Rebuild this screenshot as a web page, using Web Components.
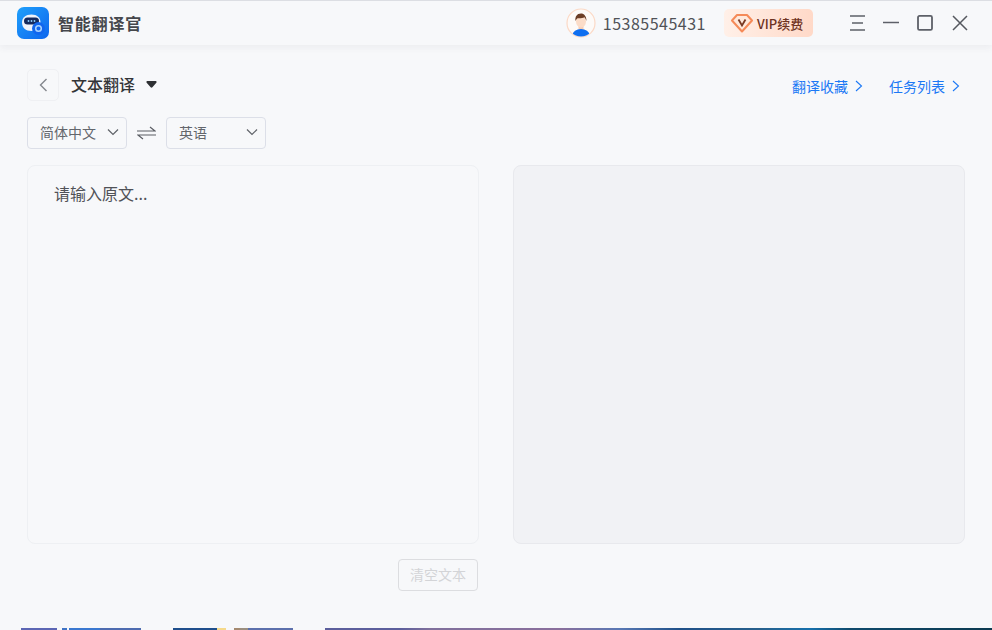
<!DOCTYPE html>
<html lang="zh">
<head>
<meta charset="utf-8">
<title>智能翻译官</title>
<style>
	html, body {
		margin: 0;
		height: 100%;
		overflow: hidden;
	}
	body {
		display: flex;
		flex-direction: column;
		height: 630px;
		background: #f7f8fa;
		font-family: "Noto Sans CJK SC", "Noto Sans", sans-serif;
		color: #333;
	}
</style>
</head>
<body>
<app-titlebar></app-titlebar>
<translate-page></translate-page>
<desktop-strip></desktop-strip>

<script>
const CHEVRON_RIGHT = `<svg width="8" height="12" viewBox="0 0 8 12" fill="none"><path d="M1 1l5.500 5L1 11" stroke="currentColor" stroke-width="1.100"/></svg>`;

class AppTitlebar extends HTMLElement {
	constructor() {
		super();
		this.attachShadow({mode: 'open'}).innerHTML = `
			<style>
				:host {
					display: flex;
					align-items: center;
					flex: none;
					height: 45px;
					padding-left: 17px;
					box-sizing: border-box;
					border-top: 1px solid #dcdee3;
					background: #f7f8fa;
					box-shadow: 0 3px 7px rgba(60, 65, 80, .06);
					position: relative;
				}
				.logo { display: block; margin-right: 9px; }
				.name {
					font-size: 16px;
					font-weight: 700;
					letter-spacing: .8px;
					color: #45474c;
					flex: 1;
				}
				.avatar { display: block; margin-right: 7px; }
				.phone {
					font-size: 16px;
					letter-spacing: .5px;
					color: #505257;
					margin-right: 18px;
				}
				.vip {
					display: flex;
					align-items: center;
					width: 89px;
					height: 28px;
					box-sizing: border-box;
					padding-left: 7px;
					border-radius: 5px;
					background: linear-gradient(90deg, #fff0e8, #ffd9c8);
					color: #6e3322;
					font-size: 13px;
					font-weight: 500;
					margin-right: 36px;
				}
				.vip svg { margin-right: 4px; }
				.win {
					display: flex;
					align-items: center;
					gap: 17px;
					margin-right: 24px;
				}
				.win svg { display: block; }
			</style>
			<svg class="logo" width="32" height="32" viewBox="0 0 32 32">
				<defs>
					<linearGradient id="lg" x1="0" y1="0" x2="1" y2="1">
						<stop offset="0" stop-color="#1fa0fb"/>
						<stop offset="1" stop-color="#0d66ee"/>
					</linearGradient>
				</defs>
				<rect width="32" height="32" rx="7" fill="url(#lg)"/>
				<path d="M14.500 7.500c5.500 0 9 3 9 8 0 5-3.500 8.500-9 8.500-6 0-9.500-3.500-9.500-8.500 0-5 3.500-8 9.500-8z" fill="#eef3fb"/>
				<rect x="7" y="10.500" width="15" height="7" rx="3.500" fill="#142a5f"/>
				<circle cx="11.500" cy="14" r=".9" fill="#8fd0ff"/>
				<circle cx="14.500" cy="14" r=".9" fill="#8fd0ff"/>
				<circle cx="17.500" cy="14" r=".9" fill="#8fd0ff"/>
				<circle cx="21.500" cy="21.500" r="6.500" fill="#1166ee"/>
				<circle cx="21.500" cy="21.500" r="2.800" fill="none" stroke="#a9d4ff" stroke-width="1.500"/>
			</svg>
			<div class="name">智能翻译官</div>
			<svg class="avatar" width="30" height="30" viewBox="0 0 30 30">
				<defs>
					<clipPath id="ac"><circle cx="15" cy="15" r="13.500"/></clipPath>
				</defs>
				<circle cx="15" cy="15" r="14" fill="#fdfaf8" stroke="#fbd9c6" stroke-width="1.200"/>
				<g clip-path="url(#ac)">
					<rect x="12.500" y="17" width="5" height="6" fill="#f8cdb4"/>
					<ellipse cx="15" cy="27" rx="8.500" ry="6" fill="#0f6ff0"/>
					<ellipse cx="15" cy="13.500" rx="5" ry="6" fill="#fbdcc8"/>
					<path d="M9.500 13c-.8-4 1.500-7.500 5.500-7.500 3 0 5.500 2.500 5.500 7.500-1-2-1.500-3.300-2-3.700-2 1-5 1.200-7 .9-.9.600-1.500 1.500-2 2.800z" fill="#6b3d26"/>
				</g>
			</svg>
			<div class="phone">15385545431</div>
			<div class="vip">
				<svg width="22" height="20" viewBox="0 0 22 20">
					<path d="M6 2h10l5 5.500L11 18.500 1 7.500z" fill="#ffe9dc" stroke="#f58a58" stroke-width="2" stroke-linejoin="round"/>
					<path d="M7.500 6.500L11 12.500l3.500-6" fill="none" stroke="#7a3a24" stroke-width="1.800"/>
				</svg>
				<span>VIP续费</span>
			</div>
			<div class="win">
				<svg width="17" height="16" viewBox="0 0 17 16" fill="none" stroke="#5d6068" stroke-width="1.500">
					<path d="M1 1h15M3 8h11M1 15h15"/>
				</svg>
				<svg width="16" height="16" viewBox="0 0 16 16" fill="none" stroke="#5d6068" stroke-width="1.500">
					<path d="M0 7.500h16"/>
				</svg>
				<svg width="19" height="16" viewBox="0 0 19 16" fill="none" stroke="#5d6068" stroke-width="1.800">
					<rect x="2" y=".9" width="14" height="14" rx="1.500"/>
				</svg>
				<svg width="16" height="16" viewBox="0 0 16 16" fill="none" stroke="#55585f" stroke-width="1.500">
					<path d="M1 1l14 14M15 1L1 15"/>
				</svg>
			</div>
		`;
	}
}

class LangSelect extends HTMLElement {
	constructor() {
		super();
		this.attachShadow({mode: 'open'}).innerHTML = `
			<style>
				:host {
					display: flex;
					align-items: center;
					justify-content: space-between;
					width: 100px;
					height: 32px;
					box-sizing: border-box;
					padding: 0 7px 2px 12px;
					border: 1px solid #dcdfe8;
					border-radius: 4px;
					font-size: 14px;
					color: #63666c;
				}
				svg { display: block; }
			</style>
			<slot></slot>
			<svg width="12" height="8" viewBox="0 0 12 8" fill="none" stroke="#5f6268" stroke-width="1.200">
				<path d="M1 1.500l5 5 5-5"/>
			</svg>
		`;
	}
}

class TextPanel extends HTMLElement {
	constructor() {
		super();
		this.attachShadow({mode: 'open'}).innerHTML = `
			<style>
				:host {
					display: block;
					box-sizing: border-box;
					min-height: 0;
					border: 1px solid #eef0f3;
					border-radius: 8px;
					padding: 15px 26px;
					font-size: 16px;
					line-height: 24px;
					color: #505257;
				}
				:host([result]) {
					background: #f1f2f5;
					border-color: #e8e9ed;
				}
			</style>
			<slot></slot>
		`;
	}
}

class TranslatePage extends HTMLElement {
	constructor() {
		super();
		this.attachShadow({mode: 'open'}).innerHTML = `
			<style>
				:host {
					display: flex;
					flex-direction: column;
					flex: 1;
					min-height: 0;
					box-sizing: border-box;
					padding: 23px 27px 0;
				}
				.head {
					display: flex;
					align-items: center;
					height: 34px;
				}
				.back {
					display: flex;
					align-items: center;
					justify-content: center;
					width: 32px;
					height: 32px;
					box-sizing: border-box;
					border: 1px solid #eff0f3;
					border-radius: 5px;
					margin-right: 12px;
				}
				.title {
					font-size: 16px;
					font-weight: 500;
					color: #333538;
					margin-right: 11px;
					padding-bottom: 2px;
				}
				.caret {
					width: 11px;
					height: 7px;
					display: block;
					margin-bottom: 2px;
				}
				.links {
					margin-left: auto;
					display: flex;
					gap: 26px;
					margin-right: 5px;
					padding-top: 2px;
				}
				.link {
					display: flex;
					align-items: center;
					gap: 7px;
					font-size: 14px;
					color: #1b78f5;
				}
				.langs {
					display: flex;
					align-items: center;
					margin-top: 15px;
				}
				.swap { display: block; margin: 0 10px; }
				.panels {
					display: grid;
					grid-template-columns: 452px 452px;
					column-gap: 34px;
					height: 379px;
					margin-top: 16px;
				}
				.foot {
					display: flex;
					width: 451px;
					justify-content: flex-end;
					margin-top: 15px;
				}
				.clear {
					width: 80px;
					height: 32px;
					box-sizing: border-box;
					border: 1px solid #dcdde0;
					border-radius: 4px;
					padding-bottom: 2px;
					display: flex;
					align-items: center;
					justify-content: center;
					font-size: 14px;
					color: #d3d4d7;
				}
			</style>
			<div class="head">
				<div class="back">
					<svg width="9" height="14" viewBox="0 0 9 14" fill="none" stroke="#84878d" stroke-width="1.400">
						<path d="M7.500 1L1.500 7l6 6"/>
					</svg>
				</div>
				<div class="title">文本翻译</div>
				<svg class="caret" viewBox="0 0 12 8"><path d="M1.500 0h9c1.200 0 1.800 1.200 1 2L7 7.200c-.6.600-1.400.600-2 0L.5 2c-.8-.8-.2-2 1-2z" fill="#2e3033"/></svg>
				<div class="links">
					<div class="link">翻译收藏 ${CHEVRON_RIGHT}</div>
					<div class="link">任务列表 ${CHEVRON_RIGHT}</div>
				</div>
			</div>
			<div class="langs">
				<lang-select>简体中文</lang-select>
				<svg class="swap" width="19" height="14" viewBox="0 0 19 14" fill="none" stroke="#5a5d63" stroke-width="1.200">
					<path d="M0 5h18L13 1M19 9H1l5 4"/>
				</svg>
				<lang-select>英语</lang-select>
			</div>
			<div class="panels">
				<text-panel>请输入原文...</text-panel>
				<text-panel result></text-panel>
			</div>
			<div class="foot">
				<div class="clear">清空文本</div>
			</div>
		`;
	}
}

class DesktopStrip extends HTMLElement {
	constructor() {
		super();
		this.attachShadow({mode: 'open'}).innerHTML = `
			<style>
				:host {
					display: block;
					flex: none;
					height: 2px;
					background: linear-gradient(90deg,
						#f7f8fa 0 21px, #5c66b4 21px 57px, #f7f8fa 57px 62px, #3f73c4 62px 67px,
						#f7f8fa 67px 69px, #3a78d0 69px 100px, #4e6cb0 100px 141px, #f7f8fa 141px 173px,
						#1f4f8c 173px 217px, #f5d98a 217px 226px, #f7f8fa 226px 234px, #a58a70 234px 239px,
						#9b8f80 241px 248px, #5c70ac 248px 293px, #f7f8fa 293px 325px,
						#5c5f9c 325px 400px, #80709c 430px, #8a6f9c 560px, #5878b4 620px,
						#1f5088 680px, #27608c 760px, #1670ac 810px, #0f4a6c 850px, #0c3a50 992px);
				}
			</style>
		`;
	}
}

customElements.define('app-titlebar', AppTitlebar);
customElements.define('lang-select', LangSelect);
customElements.define('text-panel', TextPanel);
customElements.define('translate-page', TranslatePage);
customElements.define('desktop-strip', DesktopStrip);
</script>
</body>
</html>
